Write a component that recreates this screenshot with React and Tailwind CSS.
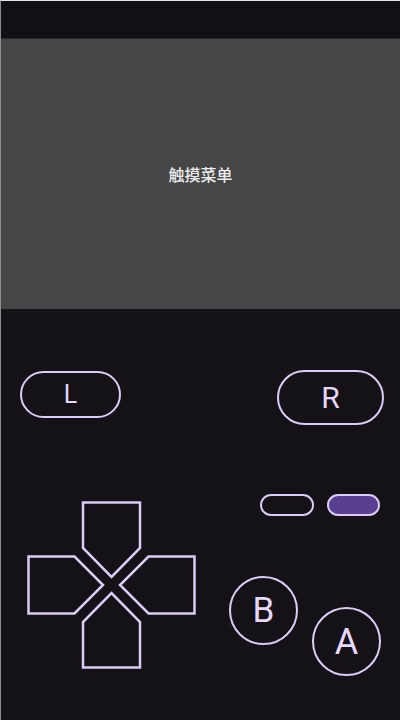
import React from "react";

const lilac = "#dccbf4";

// D-pad drawn as four pentagons pointing at the centre
function DPad() {
  return (
    <svg width="169" height="168" viewBox="0 0 169 168" fill="none">
      <g stroke={lilac} strokeWidth="2.5" strokeLinejoin="miter">
        <path d="M56 1.5H113V47L84.5 76L56 47Z" />
        <path d="M56 166.5H113V121L84.5 92L56 121Z" />
        <path d="M1.5 55.5H47.5L76 84L47.5 112.5H1.5Z" />
        <path d="M167.5 55.5H121.5L93 84L121.5 112.5H167.5Z" />
      </g>
    </svg>
  );
}

export default function App() {
  return (
    <div className="w-[400px] h-[720px] overflow-hidden bg-[#141117] border-t border-l border-t-[#e4e4e4] border-l-[#8c8c8c] flex flex-col font-['Roboto','Noto_Sans_CJK_SC',sans-serif]">
      {/* status strip */}
      <div className="h-[38px] shrink-0 bg-[#131015] border-b border-[#2a2530]" />

      {/* game screen */}
      <div className="h-[270px] shrink-0 bg-[#464646] flex items-center justify-center">
        <span className="text-[16px] font-medium text-[#ececec] mt-[3px]">触摸菜单</span>
      </div>

      {/* controller */}
      <div className="flex-1 flex flex-col">
        <div className="flex justify-between items-start pt-[62px] pl-[19px] pr-[16px]">
          <button className="w-[101px] h-[47px] rounded-full border-[2.5px] border-[#dccbf4] flex items-center justify-center text-[25px] font-normal text-[#e6d8f8] leading-none">
            L
          </button>
          <button className="w-[107px] h-[55px] -mt-px rounded-full border-[2.5px] border-[#dccbf4] flex items-center justify-center text-[30px] font-normal text-[#e6d8f8] leading-none">
            R
          </button>
        </div>

        <div className="flex items-start">
          <div className="ml-[26px] mt-[76px]">
            <DPad />
          </div>

          <div className="ml-[33px] mt-[69px] flex flex-col">
            <div className="flex gap-[13px] ml-[31px]">
              <div className="w-[54px] h-[22px] rounded-full border-[2.5px] border-[#dccbf4]" />
              <div className="w-[53px] h-[22px] rounded-full border-[2.5px] border-[#dccbf4] bg-[#583f90]" />
            </div>
            <div className="flex items-start mt-[60px]">
              <button className="w-[69px] h-[69px] rounded-full border-[2.5px] border-[#dccbf4] flex items-center justify-center text-[35px] font-normal text-[#e6d8f8] leading-none">
                B
              </button>
              <button className="w-[69px] h-[69px] ml-[14px] mt-[31px] rounded-full border-[2.5px] border-[#dccbf4] flex items-center justify-center text-[36px] font-normal text-[#e6d8f8] leading-none">
                A
              </button>
            </div>
          </div>
        </div>
      </div>
    </div>
  );
}
